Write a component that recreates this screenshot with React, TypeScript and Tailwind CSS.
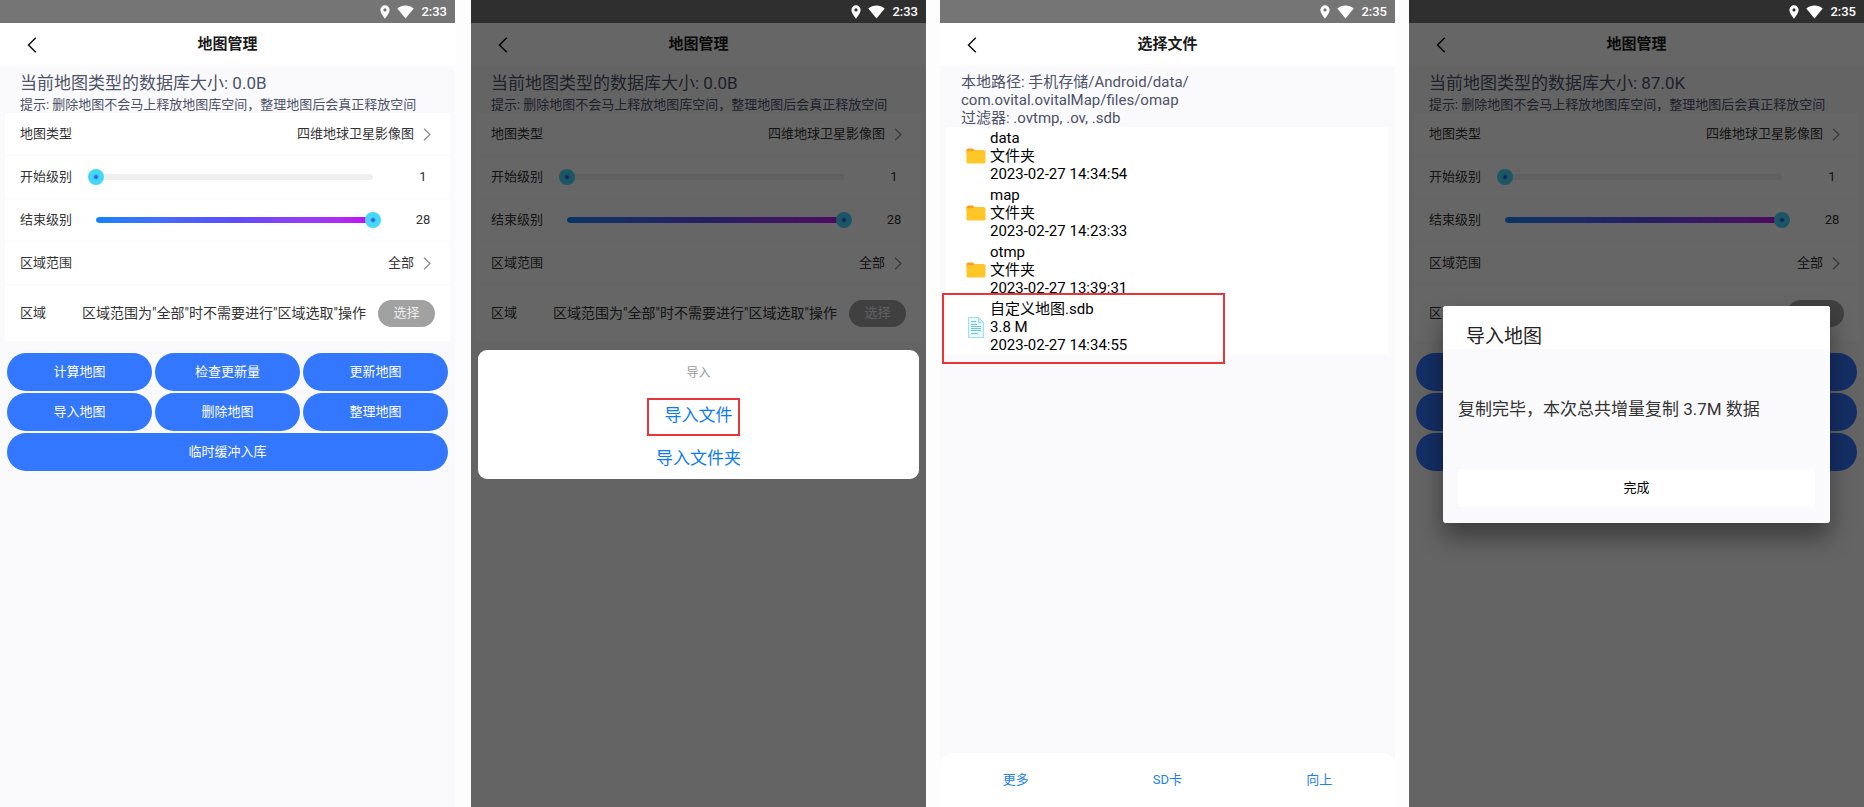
import React, { useId, useState } from 'react';
import clsx from 'clsx';

const MIN_LEVEL = 1;
const MAX_LEVEL = 28;

const ACTIONS = ['计算地图', '检查更新量', '更新地图', '导入地图', '删除地图', '整理地图'];

interface FileEntry {
  name: string;
  info: string;
  date: string;
  folder: boolean;
  marked?: boolean;
}

const FILES: FileEntry[] = [
  { name: 'data', info: '文件夹', date: '2023-02-27 14:34:54', folder: true },
  { name: 'map', info: '文件夹', date: '2023-02-27 14:23:33', folder: true },
  { name: 'otmp', info: '文件夹', date: '2023-02-27 13:39:31', folder: true },
  { name: '自定义地图.sdb', info: '3.8 M', date: '2023-02-27 14:34:55', folder: false, marked: true },
];

// Icons
const PinIcon = () => (
  <svg viewBox="0 0 10 14" className="w-[10px] h-[14px]" fill="#fff" aria-hidden="true">
    <path fillRule="evenodd" d="M5 .3A4.6 4.6 0 0 0 .4 4.9C.4 8.2 5 13.6 5 13.6s4.6-5.4 4.6-8.7A4.6 4.6 0 0 0 5 .3Zm0 3a1.6 1.6 0 1 1 0 3.2 1.6 1.6 0 0 1 0-3.2Z" />
  </svg>
);

const WifiIcon = () => (
  <svg viewBox="0 0 17 14" className="w-[17px] h-[14px]" fill="#fff" aria-hidden="true">
    <path d="M8.5 13.5.3 3.4C2.6 1.500 5.400.5 8.500.5s5.900 1 8.200 2.900Z" />
  </svg>
);

const BackIcon = () => (
  <svg viewBox="0 0 10 16" className="w-[10px] h-4" fill="none" stroke="#111" strokeWidth="1.5" aria-hidden="true">
    <path d="M8.8.8 1.5 8l7.3 7.2" />
  </svg>
);

const NextIcon = () => (
  <svg viewBox="0 0 8 13" className="w-2 h-[13px]" fill="none" stroke="#8a8a8a" strokeWidth="1.2" aria-hidden="true">
    <path d="m1 .8 6 5.7-6 5.7" />
  </svg>
);

const FolderIcon = () => (
  <svg viewBox="0 0 20 16" className="w-5 h-4" aria-hidden="true">
    <path fill="#f9a01b" d="M.5 2A1.5 1.5 0 0 1 2 .5h4.8l1.600 1.700H18V6H.5Z" />
    <path fill="#fec727" d="M.5 3.200h6.500L8.600 2.200H18A1.500 1.500 0 0 1 19.500 3.700v10.400A1.500 1.500 0 0 1 18 15.600H2A1.500 1.500 0 0 1 .5 14.100Z" />
  </svg>
);

const DocIcon = () => (
  <svg viewBox="0 0 16 21" className="w-4 h-[21px]" fill="none" aria-hidden="true">
    <path fill="#e4f8fd" stroke="#a5dcec" d="M.5.5h10l5 5v15H.5Z" />
    <path fill="#c6eef9" stroke="#a5dcec" d="M10.5.5v5h5Z" />
    <path stroke="#74c4e2" d="M3 4.500h5M3 7.500h6M3 9.500h10M3 11.500h10M3 13.500h10M3 16.500h7" />
  </svg>
);

// Phone frame: status bar, title bar, page content and an optional dimmed layer
interface PhoneProps {
  time: string;
  title: string;
  overlay?: React.ReactNode;
  children: React.ReactNode;
  className?: string;
}

const Phone: React.FC<PhoneProps> = ({ time, title, overlay, children, className }) => (
  <section className={clsx('flex-1 min-w-0 flex flex-col bg-[#fafafc]', className)}>
    <div
      className={clsx(
        'h-[23px] shrink-0 flex items-center justify-end pr-2 text-[13px] font-medium text-white',
        overlay ? 'bg-[#2f2f2f]' : 'bg-[#757575]'
      )}
    >
      <PinIcon />
      <span className="mx-[7px]">
        <WifiIcon />
      </span>
      <span>{time}</span>
    </div>

    <div className="relative flex-1 flex flex-col">
      <header className="h-[43px] shrink-0 grid grid-cols-[1fr_auto_1fr] items-center bg-white">
        <button type="button" aria-label="返回" className="justify-self-start pl-[27px]">
          <BackIcon />
        </button>
        <h1 className="text-[15px] font-bold text-[#1a1a1a]">{title}</h1>
      </header>
      {children}
      {overlay && <div className="absolute inset-0 bg-black/60">{overlay}</div>}
    </div>
  </section>
);

const Row: React.FC<{ children: React.ReactNode; tall?: boolean }> = ({ children, tall }) => (
  <div className={clsx('flex items-center px-[15px]', tall ? 'h-14' : 'h-[43px] border-b border-[#fafafb]')}>
    {children}
  </div>
);

const LinkRow: React.FC<{ label: string; value: string }> = ({ label, value }) => (
  <Row>
    <button type="button" className="w-full flex items-center pr-1">
      <span>{label}</span>
      <span className="ml-auto mr-[9px]">{value}</span>
      <NextIcon />
    </button>
  </Row>
);

const SliderRow: React.FC<{ label: string; initial: number }> = ({ label, initial }) => {
  const id = useId();
  const [value, setValue] = useState(initial);
  const percent = ((value - MIN_LEVEL) / (MAX_LEVEL - MIN_LEVEL)) * 100;

  return (
    <Row>
      <label htmlFor={id}>{label}</label>
      <div className="relative flex-1 h-4 ml-4 mr-[30px]">
        <div className="absolute inset-x-2 top-[5px] h-[6px] rounded-full bg-[#efefef] overflow-hidden">
          <div
            className="h-full rounded-full bg-linear-to-r from-[#0a84f7] via-[#5a4cf8] to-[#c400ee]"
            style={{ width: `${percent}%` }}
          />
        </div>
        <input
          id={id}
          type="range"
          min={MIN_LEVEL}
          max={MAX_LEVEL}
          value={value}
          onChange={(e) => setValue(Number(e.target.value))}
          className="absolute inset-0 w-full h-4 appearance-none bg-transparent [&::-webkit-slider-thumb]:appearance-none [&::-webkit-slider-thumb]:w-4 [&::-webkit-slider-thumb]:h-4 [&::-webkit-slider-thumb]:rounded-full [&::-webkit-slider-thumb]:bg-[radial-gradient(circle,#2860e0_0,#2860e0_1px,#45d7fa_3px)]"
        />
      </div>
      <output htmlFor={id} className="w-6 text-center">{value}</output>
    </Row>
  );
};

const MapManager: React.FC<{ size: string }> = ({ size }) => (
  <main>
    <div className="h-[47px] pt-[5px] px-5 text-[#4c5269] whitespace-nowrap">
      <p className="text-[17px] leading-6">当前地图类型的数据库大小: {size}</p>
      <p className="text-[13px] leading-5">提示: 删除地图不会马上释放地图库空间，整理地图后会真正释放空间</p>
    </div>

    <div className="mx-[5px] bg-white text-[13px] text-[#333]">
      <LinkRow label="地图类型" value="四维地球卫星影像图" />
      <SliderRow label="开始级别" initial={MIN_LEVEL} />
      <SliderRow label="结束级别" initial={MAX_LEVEL} />
      <LinkRow label="区域范围" value="全部" />
      <Row tall>
        <span>区域</span>
        <span className="ml-auto mr-3 text-sm whitespace-nowrap">
          区域范围为"全部"时不需要进行"区域选取"操作
        </span>
        <button type="button" className="w-[57px] h-[27px] rounded-full bg-[#a1a1a1] text-[#ececec]">
          选择
        </button>
      </Row>
    </div>

    <div className="mt-3 mx-[7px] grid grid-cols-3 gap-x-[3px] gap-y-[2px] text-[13px] text-white">
      {ACTIONS.map((action) => (
        <button key={action} type="button" className="h-[38px] rounded-full bg-[#3377ff]">
          {action}
        </button>
      ))}
      <button type="button" className="col-span-3 h-[38px] rounded-full bg-[#3377ff]">
        临时缓冲入库
      </button>
    </div>
  </main>
);

const ImportSheet = () => (
  <div
    role="dialog"
    aria-label="导入"
    className="absolute inset-x-[7px] top-[327px] rounded-[9px] bg-white flex flex-col items-center text-[17px] text-[#0a7bf0]"
  >
    <p className="h-[43px] pt-[2px] flex items-center text-xs text-[#999]">导入</p>
    <button type="button" className="h-[43px] pt-[2px]">导入文件</button>
    <button type="button" className="h-[43px] pt-[2px]">导入文件夹</button>
    <span className="absolute left-[169px] top-12 w-[93px] h-[38px] border-2 border-[#e8353a] pointer-events-none" />
  </div>
);

const DoneDialog = () => (
  <div
    role="dialog"
    aria-labelledby="done-title"
    className="absolute inset-x-[34px] top-[283px] rounded-[3px] overflow-hidden bg-[#fafafc] shadow-[0_14px_24px_rgba(0,0,0,0.4)]"
  >
    <h2 id="done-title" className="h-[43px] pt-[19px] pl-[23px] bg-white text-[19px] leading-6 text-[#222]">
      导入地图
    </h2>
    <p className="h-[120px] pt-[2px] flex items-center px-[15px] text-[17px] text-[#333]">
      复制完毕，本次总共增量复制 3.7M 数据
    </p>
    <div className="px-[15px] pb-4">
      <button type="button" className="w-full h-[38px] rounded-[3px] bg-white text-[13px] text-black">
        完成
      </button>
    </div>
  </div>
);

const FilePicker = () => (
  <main className="flex-1 flex flex-col">
    <div className="h-[61px] pt-[7px] px-[21px] text-[15px] leading-[18px] text-[#4c5269]">
      <p>本地路径: 手机存储/Android/data/</p>
      <p>com.ovital.ovitalMap/files/omap</p>
      <p>过滤器: .ovtmp, .ov, .sdb</p>
    </div>

    <ul className="mx-[6px] bg-white text-[15px] leading-[18px] text-black">
      {FILES.map((file) => (
        <li key={file.name} className="relative h-[57px] pt-[2px] flex">
          <span className="w-5 mr-1 ml-5 h-[54px] flex items-center justify-center">
            {file.folder ? <FolderIcon /> : <DocIcon />}
          </span>
          <div>
            <p>{file.name}</p>
            <p>{file.info}</p>
            <p>{file.date}</p>
          </div>
          {file.marked && (
            <span className="absolute -left-1 -top-[5px] w-[283px] h-[71px] border-2 border-[#e8353a] pointer-events-none" />
          )}
        </li>
      ))}
    </ul>

    <nav className="mt-auto h-[54px] grid grid-cols-3 rounded-t-xl bg-white text-[13px] text-[#1a82f0]">
      <button type="button">更多</button>
      <button type="button">SD卡</button>
      <button type="button">向上</button>
    </nav>
  </main>
);

export default function App() {
  return (
    <div className="min-h-screen flex bg-[#fdfdfd] font-['Roboto','Noto_Sans_CJK_SC',sans-serif]">
      <Phone time="2:33" title="地图管理" className="mr-4">
        <MapManager size="0.0B" />
      </Phone>
      <Phone time="2:33" title="地图管理" overlay={<ImportSheet />} className="mr-[14px]">
        <MapManager size="0.0B" />
      </Phone>
      <Phone time="2:35" title="选择文件" className="mr-[14px]">
        <FilePicker />
      </Phone>
      <Phone time="2:35" title="地图管理" overlay={<DoneDialog />}>
        <MapManager size="87.0K" />
      </Phone>
    </div>
  );
}
